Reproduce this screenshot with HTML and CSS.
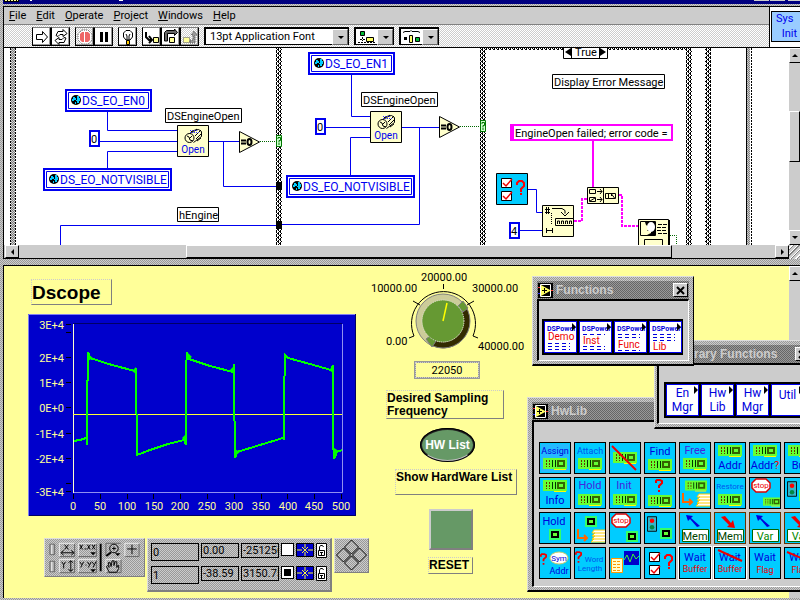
FILE: index.html
```html
<!DOCTYPE html>
<html lang="en">
<head>
<meta charset="utf-8">
<title>Dscope</title>
<link rel="stylesheet" href="styles.css">
</head>
<body>
<svg class="defs" aria-hidden="true">
  <defs>
    <pattern id="check" width="4" height="4" patternUnits="userSpaceOnUse"><path fill="#fff" d="M0 0h4v4H0z"/><path d="M0 0h1v1H0zM2 0h1v1H2zM1 1h2v1H1zM0 2h1v1H0zM2 2h1v1H2zM0 3h1v1H0zM3 3h1v1H3z"/></pattern>
    <pattern id="grain" width="2" height="2" patternUnits="userSpaceOnUse"><path fill="#ccc" d="M0 0h2v2H0z"/><path fill="#808080" d="M0 0h1v1H0zM1 1h1v1H1z"/></pattern>
    <symbol id="globe" viewBox="0 0 10 10"><circle cx="5" cy="5" r="5"/><path fill="#00ccff" d="M2 2h2v1h1v2H3v1H1V4h1zM6 1h2v2h1v3H8v2H6V6H5V5h1z"/><path fill="#00ccff" d="M4 7h1v2H4z"/></symbol>
    <symbol id="engine" viewBox="0 0 32 32"><path fill="#ffffcc" stroke="#000" d="M.5.5h31v31H.5z"/><path fill="none" stroke="#000" d="M8.500 12.500l8-7 5-1 3 2v5l-8 6M11 10l4-4M19 14l5-5M18 11l6-6M15 8l5-4M20 16l4-3"/><circle cx="12.500" cy="13" r="4.500" fill="#ffffcc" stroke="#000"/><path fill="none" stroke="#000" d="M10 11l2 1 1 3 3 1M13 13l2-2"/><path stroke="#33f" stroke-dasharray="1 1" d="M13 5.500h8M13 7.500h10"/></symbol>
    <symbol id="equal" viewBox="0 0 22 22"><path fill="#ffffcc" stroke="#000" d="M.5.5l20 10.500L.5 21.500z"/><path stroke="#000" stroke-width="2" d="M2 9.500h5M2 12.500h5"/><ellipse cx="10.500" cy="11" rx="2" ry="3" fill="none" stroke="#000" stroke-width="2"/></symbol>
    <symbol id="checks" viewBox="0 0 32 32"><path fill="#fff" stroke="#000" d="M5.500 5.500h10v9h-10zM5.500 18.500h10v9h-10z"/><path fill="none" stroke="#e00" stroke-width="1.500" d="M7 10l3 3 6-7M7 23l3 3 6-7"/><path fill="none" stroke="#f00" stroke-width="2" d="M21 12v-2l2-2h3l2 2v3l-3 3v3M25 20v2"/></symbol>
    <symbol id="board" viewBox="0 0 24 12"><path fill="#66ff33" d="M0 0h24v11H0z"/><path fill="#ff0" d="M11 11h12v1H11z"/><path stroke="#630" stroke-width="1" stroke-dasharray="2 1" d="M3.500 2v7M6.500 2v7"/><path stroke="#030" d="M9.500 2v7M12.500 2v7"/><path fill="#360" d="M14 2h8v7h-8z"/><path fill="#66ff33" d="M16 4h4v3h-4z"/></symbol>
    <symbol id="chip" viewBox="0 0 12 12"><path fill="#3f6" d="M0 0h12v11H0z"/><path d="M2 2h8v7H2z"/><path fill="#66ff33" d="M4 4h4v3H4z"/></symbol>
    <symbol id="stop" viewBox="0 0 20 15"><path fill="#fff" stroke="#d00" stroke-width="1.500" d="M5 1h10l4 4v5l-4 4H5l-4-4V5z"/></symbol>
    <symbol id="light" viewBox="0 0 11 17"><path fill="#33b5cc" stroke="#000" d="M.5.5h10v16H.5z"/><circle cx="5.500" cy="5" r="2.500" fill="#f00"/><circle cx="5.500" cy="12" r="2.500" fill="#084"/></symbol>
    <symbol id="stack" viewBox="0 0 30 14"><path fill="none" stroke="#f60" stroke-width="2" d="M2 0v9h9M8 6l3 3-3 3"/><path fill="#fff" stroke="#fc0" d="M18 1h12v12H15l3-3h-2l3-3h-3l3-3h-3z"/><path stroke="#fc0" d="M18 4h12M17 7h13M16 10h14"/></symbol>
    <symbol id="up" viewBox="0 0 14 12"><path fill="#00d" d="M0 0l7 1-2 2 9 8-3 1-7-8-2 2z"/></symbol>
    <symbol id="down" viewBox="0 0 14 12"><path fill="#e00" d="M14 12l-8-1 2-2L0 1l4-1 6 7 2-3z"/></symbol>
    <symbol id="quest" viewBox="0 0 8 13"><path fill="none" stroke="#e00" stroke-width="2" d="M1 4V2l1-1h3l2 1v2L4 7v2M4 11v2"/></symbol>
    <symbol id="vi" viewBox="0 0 15 15"><path fill="#000" d="M0 0h15v15H0z"/><path fill="none" stroke="#fff" d="M2.500 1.500h10v12h-10z"/><path fill="#ff6" d="M3 2l10 5.500L3 13z"/><path stroke="#000" d="M4 7.500h5M6.500 5v5"/><path stroke="#f33" d="M0 4.500h2M13 7.500h2"/><path stroke="#33f" d="M0 10.500h2"/></symbol>
    <symbol id="curs" viewBox="0 0 18 14"><path fill="#0000cc" stroke="#000" d="M.5.5h17v13H.5z"/><path stroke="#ff3" d="M1 7h5M12 7h5M9 1v4M9 9v4M6 4l6 6M12 4l-6 6"/></symbol>
    <symbol id="lock" viewBox="0 0 11 15"><path fill="#fff" stroke="#000" d="M.5.5h10v14H.5z"/><path fill="none" stroke="#000" d="M3.500 7V4l1-1.500h2l1 1.500M2.500 7.500h6v5h-6zM4 9.500h3M5.500 9v3"/></symbol>
  </defs>
</svg>

<main class="desktop">
  <section class="window diagram-window" aria-label="Block diagram">
    <div class="titlebar">
      <svg viewBox="0 0 800 4" width="800" height="4" aria-hidden="true"><path d="M4 0h15v2H4z"/><path stroke="#ff9" stroke-dasharray="2 1" d="M5 .5h13"/><path fill="#fff" d="M30 0h2v1h-2zM119 0h4v1h-4z"/><path fill="#ccc" d="M754 0h15v1h-15zM770 0h15v1h-15zM788 0h12v1h-12z"/></svg>
    </div>
    <div class="head">
      <div class="bars">
        <nav class="menubar">
          <a href="#"><u>F</u>ile</a><a href="#"><u>E</u>dit</a><a href="#"><u>O</u>perate</a><a href="#"><u>P</u>roject</a><a href="#"><u>W</u>indows</a><a href="#"><u>H</u>elp</a>
        </nav>
        <div class="toolbar">
          <div class="group">
            <button class="tool" aria-label="Run"><svg viewBox="0 0 16 16"><path fill="#fff" stroke="#000" d="M2.500 5.500h6v-3l5 5.500-5 5.500v-3h-6z"/></svg></button>
            <button class="tool" aria-label="Run continuously"><svg viewBox="0 0 16 16"><path fill="#fff" stroke="#000" d="M3 6.500l2-4h5V.5l4 4-4 3v-2H7l-2 2zM13 9l-2 4.500H6v2l-4-4 4-3v2h3l2-2z"/></svg></button>
          </div>
          <div class="group">
            <button class="tool grainy" aria-label="Abort"><svg viewBox="0 0 16 16"><path fill="#fff" stroke="#555" stroke-dasharray="1 1" d="M5 1h6l4 4v6l-4 4H5l-4-4V5z"/><path fill="#e66" d="M5 3h2v10H5L3 11V5zM8 3h3l2 2v6l-2 2H8z"/></svg></button>
            <button class="tool" aria-label="Pause"><svg viewBox="0 0 16 16"><path d="M4 3h3v10H4zM9 3h3v10H9z"/></svg></button>
          </div>
          <div class="group">
            <button class="tool" aria-label="Highlight execution"><svg viewBox="0 0 16 16"><path fill="#fff" stroke="#000" d="M6 11L3.500 8V4L6 1.500h4L12.500 4v4L10 11z"/><path fill="none" stroke="#000" d="M6 5l1 2v4M10 5L9 7v4"/><path fill="#fc0" stroke="#000" d="M6.500 11.500h3v4h-3z"/></svg></button>
          </div>
          <div class="group">
            <button class="tool" aria-label="Step into"><svg viewBox="0 0 16 16"><path fill="#ff9" stroke="#000" d="M9.500 8.500h5v5h-5z"/><path fill="none" stroke="#000" stroke-width="2" d="M2 3v5l3 3h2M5 7l3 4-3 3"/></svg></button>
            <button class="tool" aria-label="Step over"><svg viewBox="0 0 16 16"><path fill="#ff9" stroke="#000" d="M6.500 8.500h5v5h-5z"/><path fill="#666" stroke="#000" d="M1.500 12V3.500l2-2h8V0l3 3.500-3 3v-2h-7V12z"/></svg></button>
            <button class="tool grainy" aria-label="Step out"><svg viewBox="0 0 16 16"><path fill="#ff9" stroke="#555" stroke-dasharray="1 1" d="M1.500 8.500h6v5h-6z"/><path fill="#999" stroke="#555" stroke-dasharray="1 1" d="M8 11h3V6H9l3-4 3 4h-2v8H8z"/></svg></button>
          </div>
          <label class="drop font-drop"><select aria-label="Font"><option>13pt Application Font</option></select></label>
          <button class="drop ring" aria-label="Align objects"><svg viewBox="0 0 22 16"><path fill="#0b3" stroke="#000" d="M4.500 2.500h4v4h-4z"/><path fill="#ff6" stroke="#000" d="M10.500 8.500h7v4h-7z"/><path stroke="#000" d="M6.500 8v4M4 10.500h5M2 13.500h17" stroke-dasharray="2 1"/></svg></button>
          <button class="drop ring" aria-label="Distribute objects"><svg viewBox="0 0 22 16"><path fill="none" stroke="#000" d="M2 3.500l2-1h5l1-1 1 1h6l2 1"/><path d="M3 8h3v3H3z"/><path fill="#ff6" stroke="#000" d="M8.500 6.500h3v7h-3z"/><path fill="#0b3" stroke="#000" d="M14.500 8.500h4v4h-4z"/></svg></button>
        </div>
      </div>
      <div class="connector"><button class="sys"><span>Sys</span><span>Init</span></button></div>
    </div>
    <div class="view">
      <div class="canvas">
        <svg class="diagram" viewBox="4 48 785 197" width="785" height="197">
          <g fill="url(#check)"><path d="M276 48h6v197h-6zM480 48h6v197h-6zM686 48h6v197h-6zM705 48h6v197h-6zM486 48h200v2H486z"/></g>
          <g fill="url(#grain)"><path d="M11 48h4v197h-4zM747 48h3v197h-3z"/></g>
          <path d="M746.500 48v197" stroke="#000"/>
          <path d="M10.500 48v197M15.500 48v197M751.500 48v197" stroke="#000" stroke-dasharray="2 1"/>
          <g fill="none" stroke="#0000f0">
            <path d="M107.500 112v18.500H177M100 141.500h77M107.500 168v-16.500H177M209 141.500h30M223.500 141v45.500H276M60.500 245v-19.500H276"/>
            <path d="M351.500 75v41.500H370M326 127.500h44M350.500 175v-37.500H370M402 127.500h37M419.500 127v97.500H282M528 189.500h8.500v23h5.500M520 230.500h22"/>
          </g>
          <path fill="none" stroke="#060" stroke-dasharray="1 1" d="M260 141.500h16M460 126.500h20M670 235.500h6.500v10"/>
          <g fill="none" stroke="#f0f" stroke-width="2"><path d="M593 141v46"/><path stroke-dasharray="3 1" d="M574 221h8v-22h5M619 195h3v31h16"/></g>
          <path d="M276 182h6v8h-6zM276 221h6v8h-6z"/>
          <g fill="#cfc" stroke="#070"><path d="M276.500 135.500h5v11h-5zM480.500 120.500h5v11h-5z"/></g>
          <path fill="none" stroke="#070" d="M278 139v-1.500h2.500v3h-1.500v2M279 143v2M482 124v-1.500h2.500v3h-1.500v2M483 128v2"/>

          <g fill="#fff" stroke="#0000f0" stroke-width="2"><path d="M66 90h85v21H66zM44 169h127v21H44zM309 53h85v21h-85zM287 176h127v21H287zM90 131h9v15h-9zM316 119h9v15h-9zM510 223h9v15h-9z"/></g>
          <g fill="none" stroke="#0000f0"><path d="M68.500 92.500h80v16h-80zM46.500 171.500h122v16h-122zM311.500 55.500h80v16h-80zM289.500 178.500h122v16h-122z"/></g>
          <use href="#globe" x="71" y="95" width="10" height="10"/><use href="#globe" x="49" y="174" width="10" height="10"/>
          <use href="#globe" x="314" y="58" width="10" height="10"/><use href="#globe" x="292" y="181" width="10" height="10"/>
          <g class="d-blue"><text x="82" y="105">DS_EO_EN0</text><text x="60" y="184">DS_EO_NOTVISIBLE</text><text x="325" y="68">DS_EO_EN1</text><text x="303" y="191">DS_EO_NOTVISIBLE</text></g>

          <g fill="#fff" stroke="#000"><path d="M165.500 108.500h76v14h-76zM361.500 92.500h76v14h-76zM177.500 207.500h41v14h-41zM552.500 74.500h112v14h-112zM563.500 43.500h44v15h-44z"/></g>
          <path fill="#f0f" d="M510 124h163v17H510z"/><path fill="#fff" d="M514 126h157v13H514z"/>
          <path d="M571.500 48v10M599.500 48v10" stroke="#000"/><path d="M571 48v8l-6-4zM600 48v8l6-4z"/>
          <g class="d-text">
            <text x="167" y="120">DSEngineOpen</text><text x="363" y="104">DSEngineOpen</text><text x="179" y="219">hEngine</text>
            <text x="554" y="86">Display Error Message</text><text x="575" y="56">True</text>
            <text x="515" y="137">EngineOpen failed; error code =</text>
            <text x="91" y="143">0</text><text x="317" y="131">0</text><text x="511" y="235">4</text>
          </g>
          <use href="#engine" x="177" y="125" width="32" height="32"/><use href="#engine" x="370" y="111" width="32" height="32"/>
          <g class="d-open"><text x="193" y="153">Open</text><text x="386" y="139">Open</text></g>
          <use href="#equal" x="239" y="131" width="22" height="22"/><use href="#equal" x="439" y="116" width="22" height="22"/>
          <path fill="#00ccff" stroke="#000" d="M496.500 173.500h31v31h-31z"/><use href="#checks" x="496" y="173" width="32" height="32"/>
          <g fill="#ffffcc" stroke="#000">
            <path d="M542.500 205.500h31v31h-31zM587.500 187.500h31v16h-31zM638.500 219.500h30v31h-30z"/>
            <path d="M555.500 218.500h18v7h-18z"/><path d="M603.500 187v17M589.500 189.500h6v4h-6zM589.500 197.500h6v4h-6zM605.500 193.500h10v5h-10z"/>
            <path d="M640.500 221.500h15v14h-15zM644.500 239.500h18v8h-18z"/>
          </g>
          <path fill="none" stroke="#000" d="M545 209.500h5M545 212.500h5M546.500 207v7M548.500 207v7M552 208.500h10l3 2v3M561 212l4 4 4-4M546.500 228v5M552.500 228v5M546 230.500h7M557.500 224v-3h2v3M561.500 224v-3h2v3M565.500 224v-3h2v3M569.500 224v-3h2v3M597 191.500h5M600 189l2 2.500-2 2.500M597 199.500h5M600 197l2 2.500-2 2.500M590 201l5-3M608.500 194v4M611.500 196v-2l3 4"/>
          <path fill="none" stroke="#000" stroke-dasharray="1 1" d="M551.500 213v12"/>
          <path d="M645 222h10v13h-8l4-2v-2h-4l2-2v-2l-3-2z"/><ellipse cx="651" cy="227" rx="4" ry="5" fill="#fff"/>
          <path fill="none" stroke="#000" stroke-dasharray="4 1" d="M658 224.500h9M657 227.500h10M657 230.500h10M658 233.500h9"/><path stroke="#000" stroke-width="2" d="M669 220v26"/>
        </svg>
      </div>
      <div class="vscroll">
        <button class="arrow up" aria-label="Scroll up"></button><div class="thumb"></div><button class="arrow down" aria-label="Scroll down"></button>
      </div>
      <div class="hscroll">
        <button class="arrow left" aria-label="Scroll left"></button><div class="thumb"></div><button class="arrow right" aria-label="Scroll right"></button>
      </div>
      <div class="grip"></div>
    </div>
  </section>

  <section class="window panel-window" aria-label="Front panel">
    <div class="panel">
      <div class="scope">
        <h1 class="engraved title">Dscope</h1>
        <svg class="graph" viewBox="28 314 328 202" width="328" height="202" role="img" aria-label="Waveform graph">
          <path fill="#0000cc" d="M28 314h328v202H28z"/>
          <path fill="none" stroke="#8080f0" d="M28.500 516V314.500H356"/><path fill="none" stroke="#000066" d="M29 515.500h326.500V314"/>
          <path stroke="#000066" d="M73 323.500h269"/><path fill="none" stroke="#9090f0" d="M74 492.500h268.500V324"/>
          <path stroke="#ffffcc" d="M73.500 324v169"/><path stroke="#ff3" d="M73 414.500h269"/>
          <path stroke="#000" d="M66 324.500h5M66 332.500h5M66 357.500h5M66 382.500h5M66 407.500h5M66 433.500h5M66 458.500h5M66 483.500h5M66 491.500h5M73.500 494v5M100.500 494v5M127.500 494v5M153.500 494v5M180.500 494v5M207.500 494v5M234.500 494v5M261.500 494v5M287.500 494v5M314.500 494v5M341.500 494v5"/>
          <path class="trace" d="M74 441l10-2 3-2v8-64l1-1v-28l2 6 22 7 23 6 1-3v45l1 2v40l13-5 18-6 16-4 2 5v-76l1-17 2 7 21 7 23 6 1-8v18l1 76 2-6 23-7 23-7 1 2v-42l1-43 3 3 22 6 21 6 2-5v76l1 18 3-7 5-2"/>
          <path fill="#0f0" d="M88 354l5 4-5 3zM136 367l-4 4 4 3zM186 434l-4 4 4 4zM187 352l5 5-5 3zM234 366l-4 4 4 3zM235 449l5 3-5 4zM333 366l-4 4 4 3zM334 448l5 3-5 5z"/>
          <g class="y-axis"><text x="64" y="329">3E+4</text><text x="64" y="362">2E+4</text><text x="64" y="387">1E+4</text><text x="64" y="412">0E+0</text><text x="64" y="438">-1E+4</text><text x="64" y="463">-2E+4</text><text x="64" y="496">-3E+4</text></g>
          <g class="x-axis"><text x="73" y="510">0</text><text x="100" y="510">50</text><text x="127" y="510">100</text><text x="154" y="510">150</text><text x="180" y="510">200</text><text x="207" y="510">250</text><text x="234" y="510">300</text><text x="261" y="510">350</text><text x="288" y="510">400</text><text x="314" y="510">450</text><text x="341" y="510">500</text></g>
        </svg>
        <div class="scope-tools">
          <div class="raised zoom-tools">
            <svg viewBox="0 0 101 39" width="99" height="37" aria-hidden="true">
              <path fill="#aaa" stroke="#666" d="M3.500 5.500h5v11h-5zM3.500 23.500h5v11h-5z"/><path stroke="#fff" d="M5.500 6v10M5.500 24v10"/>
              <path stroke="#000" stroke-width="2" d="M57 5v29"/>
              <g fill="none" stroke="#eee"><path d="M13.500 18V4.500H30M33.500 18V4.500H53M13.500 35V21.500H30M33.500 35V21.500H53M62.500 35V21.500H78M82.500 18V4.500H98"/></g>
              <g fill="none" stroke="#666"><path d="M14 18.500h15.500V5M34 18.500h18.500V5M14 35.500h15.500V22M34 35.500h18.500V22M63 35.500h15.500V22M83 18.500h14.500V5M62.500 18V4.500H78"/></g>
              <g fill="none" stroke="#000"><path d="M19 6l4 5M23 6l-4 5M16 14.500h12M18 12l-3 2.500 3 2.500M26 12l3 2.500-3 2.500M16 24l2 3 2-3M18 27v4M25.500 23v11M23 25l2.500-2 2.500 2M23 32l2.500 2 2.500-2M35 6l3 5M38 6l-3 5M40 10.500h2M43 6l3 5M46 6l-3 5M48 6l3 5M51 6l-3 5M35 24l2 3M39 24l-3 6M41 27.500h1M43 24l2 3M47 24l-3 6M48 24l2 3M52 24l-3 6M90 6v10M85 10.500h10"/><circle cx="71" cy="10" r="4.500"/><path stroke-width="2" d="M68 14l-5 4"/><path d="M69 10h4M71 8v4M66 35l-3-6 1-1 2 2-1-5h2l1 4 1-6h2v5l1-4h2v6l1-2h1v3l-2 4z"/></g><path d="M46 14h6l-3 3zM46 32h6l-3 3zM72 15h6l-3 3z"/>
            </svg>
          </div>
          <div class="raised cursors">
            <div class="cursor-row"><input class="c-name" aria-label="Cursor 0 name" value="0"><input class="c-num" aria-label="Cursor 0 x" value="0.00"><input class="c-num" aria-label="Cursor 0 y" value="-251256"><button class="c-swatch" aria-label="Cursor 0 active"></button><button class="c-icon" aria-label="Cursor 0 style"><svg width="18" height="14"><use href="#curs"/></svg></button><button class="c-icon" aria-label="Cursor 0 lock"><svg width="11" height="15"><use href="#lock"/></svg></button></div>
            <div class="cursor-row"><input class="c-name" aria-label="Cursor 1 name" value="1"><input class="c-num" aria-label="Cursor 1 x" value="-38.59"><input class="c-num" aria-label="Cursor 1 y" value="3150.75"><button class="c-swatch on" aria-label="Cursor 1 active"></button><button class="c-icon" aria-label="Cursor 1 style"><svg width="18" height="14"><use href="#curs"/></svg></button><button class="c-icon" aria-label="Cursor 1 lock"><svg width="11" height="15"><use href="#lock"/></svg></button></div>
          </div>
          <button class="raised mover" aria-label="Move cursor"><svg viewBox="0 0 33 33" width="33" height="33"><path fill="none" stroke="#000" d="M16.500 1l7 7-7 7-7-7zM16.500 17l7 7-7 7-7-7zM8.500 9l7 7-7 7-7-7zM24.500 9l7 7-7 7-7-7z"/></svg></button>
        </div>
      </div>
      <div class="controls">
        <svg class="knob" viewBox="366 266 160 92" width="160" height="92" role="img" aria-label="Sampling frequency knob">
          <path fill="none" stroke="#000" d="M414 336A32 32 0 1 1 473 336M414 336l-5 2M473 336l5 2M420 305l-7-4M467 305l7-4M443.500 289v-5"/>
          <circle cx="443" cy="321" r="24" fill="none" stroke="#cccc99" stroke-width="6"/>
          <path fill="none" stroke="#332b00" stroke-width="6" d="M463 308A24 24 0 0 1 431 342"/>
          <circle cx="443" cy="321" r="27" fill="none" stroke="#808080"/>
          <path fill="#669933" stroke="#808080" d="M458 306l5-5 5 7-5 4zM426 339l4-3 6 5-4 6z"/>
          <circle cx="443" cy="321" r="21" fill="#669933" stroke="#ddd" stroke-dasharray="1 1"/>
          <path stroke="#ff0" stroke-width="1.500" d="M443 321l4-18"/>
          <g class="k-text"><text x="386" y="345">0.00</text><text x="371" y="292">10000.00</text><text x="421" y="281">20000.00</text><text x="472" y="292">30000.00</text><text x="478" y="350">40000.00</text></g>
        </svg>
        <input class="readout" aria-label="Desired sampling frequency" value="22050">
        <p class="engraved desired">Desired Sampling Frequency</p>
        <button class="hw-button">HW List</button>
        <p class="engraved show">Show HardWare List</p>
        <button class="reset" aria-labelledby="reset-label"></button>
        <p class="engraved reset-label" id="reset-label">RESET</p>
      </div>
    </div>
    <div class="vscroll"><button class="arrow up" aria-label="Scroll up"></button></div>
  </section>

  <section class="palette hwlib" aria-label="HwLib">
    <header><svg width="15" height="15"><use href="#vi"/></svg><h2>HwLib</h2></header>
    <div class="well">
      <div class="tiles">
        <button class="tile"><svg viewBox="0 0 32 32"><path fill="#69f" opacity=".35" d="M2 2h28v28H2z"/><text x="16" y="12">Assign</text><use href="#board" x="4" y="16" width="24" height="12"/></svg></button>
        <button class="tile"><svg viewBox="0 0 32 32"><text class="light" x="16" y="12">Attach</text><use href="#board" x="4" y="16" width="24" height="12"/></svg></button>
        <button class="tile"><svg viewBox="0 0 32 32"><use href="#board" x="4" y="10" width="24" height="12"/><path stroke="#e00" stroke-width="2" d="M3 4l24 24"/></svg></button>
        <button class="tile"><svg viewBox="0 0 32 32"><text class="big" x="16" y="13">Find</text><use href="#board" x="4" y="17" width="24" height="12"/></svg></button>
        <button class="tile"><svg viewBox="0 0 32 32"><text class="big violet" x="16" y="12">Free</text><use href="#board" x="4" y="16" width="24" height="12"/></svg></button>
        <button class="tile"><svg viewBox="0 0 32 32"><use href="#board" x="4" y="3" width="24" height="12"/><text class="big" x="16" y="27">Addr</text></svg></button>
        <button class="tile"><svg viewBox="0 0 32 32"><use href="#board" x="4" y="3" width="24" height="12"/><text class="big" x="16" y="27">Addr<tspan class="red">?</tspan></text></svg></button>
        <button class="tile"><svg viewBox="0 0 32 32"><use href="#board" x="4" y="3" width="24" height="12"/><text class="big" x="16" y="27">Buf</text></svg></button>

        <button class="tile"><svg viewBox="0 0 32 32"><use href="#board" x="4" y="3" width="24" height="12"/><text class="big" x="16" y="27">Info</text></svg></button>
        <button class="tile"><svg viewBox="0 0 32 32"><text class="big violet" x="16" y="12">Hold</text><use href="#board" x="4" y="17" width="24" height="12"/></svg></button>
        <button class="tile"><svg viewBox="0 0 32 32"><text class="big violet" x="15" y="12">Init</text><use href="#board" x="4" y="17" width="24" height="12"/></svg></button>
        <button class="tile"><svg viewBox="0 0 32 32"><use href="#quest" x="11" y="2" width="8" height="13"/><use href="#board" x="4" y="18" width="24" height="12"/></svg></button>
        <button class="tile"><svg viewBox="0 0 32 32"><use href="#board" x="6" y="3" width="22" height="12"/><use href="#stack" x="2" y="16" width="30" height="14"/></svg></button>
        <button class="tile"><svg viewBox="0 0 32 32"><text class="light small" x="16" y="12">Restore</text><use href="#board" x="4" y="17" width="24" height="12"/></svg></button>
        <button class="tile"><svg viewBox="0 0 32 32"><use href="#stop" x="2" y="1" width="20" height="15"/><text class="small red" x="12" y="11">stop</text><use href="#board" x="14" y="19" width="18" height="12"/></svg></button>
        <button class="tile"><svg viewBox="0 0 32 32"><use href="#light" x="3" y="4" width="10" height="16"/><use href="#board" x="15" y="13" width="24" height="12"/></svg></button>

        <button class="tile"><svg viewBox="0 0 32 32"><text class="big" x="15" y="13">Hold</text><use href="#chip" x="10" y="17" width="12" height="12"/></svg></button>
        <button class="tile"><svg viewBox="0 0 32 32"><use href="#chip" x="11" y="4" width="12" height="12"/><use href="#stack" x="2" y="17" width="30" height="14"/></svg></button>
        <button class="tile"><svg viewBox="0 0 32 32"><use href="#stop" x="2" y="1" width="20" height="15"/><text class="small red" x="12" y="11">stop</text><use href="#chip" x="17" y="19" width="12" height="12"/></svg></button>
        <button class="tile"><svg viewBox="0 0 32 32"><use href="#light" x="3" y="4" width="10" height="16"/><use href="#chip" x="16" y="16" width="12" height="12"/></svg></button>
        <button class="tile mem"><svg viewBox="0 0 32 32"><use href="#up" x="7" y="3" width="14" height="12"/><path fill="#fff" stroke="#060" d="M3.500 17.500h26v12h-26z"/><text class="big dark" x="16" y="28">Mem</text></svg></button>
        <button class="tile mem"><svg viewBox="0 0 32 32"><use href="#down" x="7" y="4" width="14" height="12"/><path fill="#fff" stroke="#060" d="M3.500 17.500h26v12h-26z"/><text class="big dark" x="16" y="28">Mem</text></svg></button>
        <button class="tile mem"><svg viewBox="0 0 32 32"><use href="#up" x="7" y="3" width="14" height="12"/><path fill="#fff" stroke="#060" d="M3.500 17.500h26v12h-26z"/><text class="big green" x="16" y="28">Var</text></svg></button>
        <button class="tile mem"><svg viewBox="0 0 32 32"><use href="#down" x="7" y="4" width="14" height="12"/><path fill="#fff" stroke="#060" d="M3.500 17.500h26v12h-26z"/><text class="big green" x="16" y="28">Var</text></svg></button>

        <button class="tile"><svg viewBox="0 0 32 32"><use href="#quest" x="1" y="6" width="7" height="12"/><ellipse cx="20" cy="11" rx="9" ry="6" fill="#fff" stroke="#cc6"/><text class="small" x="20" y="14">Sym</text><text x="20" y="27">Addr</text></svg></button>
        <button class="tile"><svg viewBox="0 0 32 32"><use href="#quest" x="1" y="4" width="7" height="12"/><text class="small light" x="20" y="15">Word</text><text class="small light" x="16" y="24">Length</text></svg></button>
        <button class="tile"><svg viewBox="0 0 32 32"><path fill="#00c" d="M15 4h15v14H15z"/><path fill="none" stroke="#3f3" d="M15 13l3-5 3 7 3-8 3 5 3-3"/><path fill="#ffc" stroke="#f90" d="M2.500 11.500h11v14h-11z"/><path stroke="#f90" stroke-dasharray="3 1" d="M4 14.500h8M4 17.500h8M4 20.500h8M4 23.500h8"/></svg></button>
        <button class="tile"><svg viewBox="0 0 32 32"><use href="#checks" width="32" height="32"/></svg></button>
        <button class="tile lit"><svg viewBox="0 0 32 32"><text class="big" x="16" y="14">Wait</text><text class="red" x="16" y="25">Buffer</text></svg></button>
        <button class="tile lit"><svg viewBox="0 0 32 32"><text class="big" x="16" y="14">Wait</text><text class="red" x="16" y="25">Buffer</text><path stroke="#e00" stroke-width="2" d="M4 3l24 11"/></svg></button>
        <button class="tile"><svg viewBox="0 0 32 32"><text class="big" x="16" y="14">Wait</text><text class="red" x="16" y="26">Flag</text></svg></button>
        <button class="tile"><svg viewBox="0 0 32 32"><text class="big" x="16" y="14">Wait</text><text class="red" x="16" y="26">Flag</text><path stroke="#e00" stroke-width="2" d="M3 5l26 11"/></svg></button>
      </div>
    </div>
  </section>

  <section class="palette library" aria-label="Library Functions">
    <header><svg width="15" height="15"><use href="#vi"/></svg><h2>Library Functions</h2><button class="close" aria-label="Close"><svg viewBox="0 0 9 9" width="9" height="9"><path stroke="#000" stroke-width="2" d="M1 1l7 7M8 1L1 8"/></svg></button></header>
    <div class="well">
      <div class="cards">
        <button class="card"><span>En</span><span>Mgr</span></button><button class="card"><span>Hw</span><span>Lib</span></button><button class="card"><span>Hw</span><span>Mgr</span></button><button class="card top"><span>Util</span></button>
      </div>
    </div>
  </section>

  <section class="palette functions" aria-label="Functions">
    <header><svg width="15" height="15"><use href="#vi"/></svg><h2>Functions</h2><button class="close" aria-label="Close"><svg viewBox="0 0 9 9" width="9" height="9"><path stroke="#000" stroke-width="2" d="M1 1l7 7M8 1L1 8"/></svg></button></header>
    <div class="well">
      <div class="cards">
        <button class="card"><svg class="dsp" viewBox="0 0 30 30"><text x="1" y="9">DSPower</text><path d="M2 21.500h22M2 24.500h22M2 27.500h22"/><text class="name" x="2" y="18">Demo</text></svg></button>
        <button class="card"><svg class="dsp" viewBox="0 0 30 30"><text x="1" y="9">DSPower</text><path d="M2 12.500h22M2 24.500h22M2 27.500h22"/><text class="name" x="2" y="22">Inst</text></svg></button>
        <button class="card"><svg class="dsp" viewBox="0 0 30 30"><text x="1" y="9">DSPower</text><path d="M2 12.500h22M2 15.500h22M2 28.500h22"/><text class="name" x="2" y="26">Func</text></svg></button>
        <button class="card"><svg class="dsp" viewBox="0 0 30 30"><text x="1" y="9">DSPower</text><path d="M2 12.500h22M2 15.500h22M2 18.500h22"/><text class="name" x="2" y="28">Lib</text></svg></button>
      </div>
    </div>
  </section>
</main>
</body>
</html>
```

FILE: styles.css
```css
* { box-sizing: border-box; }

:root {
  --ui: Roboto, "Liberation Sans", Arial, sans-serif;
  --bold: "Liberation Sans", Arial, sans-serif;
  --dither-light: repeating-conic-gradient(#fff 0 25%, #ccc 0 50%) 0 0 / 2px 2px;
  --dither-mid: repeating-conic-gradient(#ccc 0 25%, #999 0 50%) 0 0 / 2px 2px;
  --dither-dark: repeating-conic-gradient(#999 0 25%, #666 0 50%) 0 0 / 2px 2px;
  --yellow: #ffff99;
}

body { margin: 0; font: 11px var(--ui); color: #000; }
button, input, select { margin: 0; padding: 0; border: 0; border-radius: 0; font: inherit; color: inherit; background: none; }
h1, h2, p { margin: 0; }
.defs { position: absolute; width: 0; height: 0; }

.desktop { position: relative; display: flex; flex-direction: column; min-height: 100vh; overflow: hidden; background: var(--dither-mid); }

/* Windows */
.diagram-window { padding-left: 3px; }
.titlebar { height: 4px; background: #000080; overflow: hidden; }
.titlebar svg { display: block; margin-left: -3px; }
.head { display: flex; margin-top: 2px; border-top: 1px solid #000; border-left: 1px solid #000; border-bottom: 1px solid #000; background: #ccc; }
.bars { flex: 1; min-width: 0; }
.menubar { display: flex; gap: 10px; height: 18px; padding: 0 5px; border-bottom: 1px solid #808080; line-height: 18px; }
.menubar a { color: #000; text-decoration: none; }
.toolbar { display: flex; align-items: center; gap: 5px; height: 22px; padding-left: 28px; background: var(--dither-light); }
.group { display: flex; }
.tool { width: 19px; height: 19px; padding: 1px; border: 1px solid #000; border-top-color: #808080; background: #fff; box-shadow: inset -1px -1px #999; }
.tool svg { display: block; width: 16px; height: 16px; }
.tool.grainy { background: var(--dither-light); }
.drop { position: relative; display: flex; height: 18px; border: 2px solid #000; border-right-width: 1px; border-bottom-width: 1px; background: #fff; }
.font-drop { width: 145px; }
.font-drop select { flex: 1; padding-left: 4px; appearance: none; outline: 0; }
.drop::before { content: ""; position: absolute; top: 0; right: 0; width: 14px; height: 14px; background: #ccc; border: 1px solid #fff; border-right-color: #666; border-bottom-color: #666; pointer-events: none; }
.drop::after { content: ""; position: absolute; top: 7px; right: 4px; border: 3px solid transparent; border-top-color: #000; border-bottom: 0; pointer-events: none; }
.ring { width: 40px; }
.ring svg { width: 22px; height: 16px; }
.connector { width: 31px; padding: 4px 0 5px 1px; border-left: 1px solid #000; background: #fff; }
.sys { display: grid; width: 29px; height: 31px; border: 1px solid #000; border-right: 0; background: #99ccff; color: #0000ee; line-height: 14px; }
.sys span:first-child { text-align: left; padding-left: 4px; }
.sys span:last-child { text-align: right; padding-right: 3px; }

.view { display: grid; grid-template-columns: 1fr 11px; border-left: 1px solid #000; background: #ccc; }
.canvas { overflow: hidden; background: #fff; }
.diagram { display: block; }
.vscroll { display: flex; flex-direction: column; background: #ccc; }
.vscroll .thumb { flex: 0 0 51px; margin-top: 48px; }
.vscroll .down { margin-top: auto; }
.hscroll { display: flex; height: 14px; border-bottom: 1px solid #000; padding-left: 1px; }
.hscroll .thumb { flex: 0 1 62%; margin-left: 167px; }
.hscroll .right { margin-left: auto; }
.thumb { background: #ccc; border: 1px solid #fff; border-right-color: #000; border-bottom-color: #000; }
.arrow { display: grid; place-items: center; width: 14px; height: 13px; background: #ccc; border: 1px solid #fff; border-right-color: #000; border-bottom-color: #000; }
.vscroll .arrow { width: 11px; height: 15px; border-right: 0; }
.arrow::before { content: ""; border: 3px solid transparent; }
.up::before { border-bottom-color: #000; border-top: 0; }
.down::before { border-top-color: #000; border-bottom: 0; }
.left::before { border-right-color: #000; border-left: 0; }
.right::before { border-left-color: #000; border-right: 0; }
.grip { background: repeating-linear-gradient(135deg, #ccc 0 2px, #fff 2px 3px, #808080 3px 4px); }

.d-text { font: 11px var(--ui); }
.d-blue { font: 12px var(--ui); }
.d-blue, .d-open { fill: #0000f0; }
.d-open { font: 10px var(--ui); text-anchor: middle; }

.panel-window { display: flex; flex: 1; margin: 6px 0 2px 3px; border-top: 1px solid #000; border-left: 1px solid #000; background: var(--yellow); }
.panel { flex: 1; display: flex; align-items: flex-start; min-width: 0; }
.scope { display: flex; flex-direction: column; width: 362px; padding: 13px 0 0 24px; }
.engraved { font: bold 12px/13px var(--bold); border: 1px dotted #ccc; border-right: 1px solid #808080; border-bottom: 1px solid #808080; padding: 1px 0; }
.title { width: 81px; height: 26px; margin-left: 3px; font-size: 19px; line-height: 24px; }
.graph { display: block; margin-top: 9px; }
.trace { fill: none; stroke: #00ff00; stroke-width: 2px; shape-rendering: crispEdges; }
.y-axis, .x-axis { font: 11px var(--ui); fill: #ffff99; text-anchor: middle; }
.y-axis { text-anchor: end; }
.scope-tools { display: flex; align-items: flex-start; gap: 2px; margin: 22px 0 0 16px; }
.raised { background: var(--dither-mid); border: 1px solid #ddd; border-right-color: #808080; border-bottom-color: #808080; }
.raised svg { display: block; }
.zoom-tools { width: 101px; }
.cursors { width: 185px; padding: 4px 3px 6px; display: grid; gap: 5px; border-right-width: 2px; border-bottom-width: 2px; }
.cursor-row { display: flex; gap: 2px; align-items: flex-start; }
.cursor-row input { min-width: 0; height: 15px; border: 1px solid #000; padding-left: 1px; }
.cursor-row .c-name { width: 48px; height: 18px; }
.cursor-row .c-num { width: 38px; }
.c-swatch { width: 13px; height: 13px; border: 1px solid #000; background: #fff; }
.c-swatch.on { box-shadow: inset 0 0 0 2px #fff; background: #000; }
.mover { width: 35px; height: 35px; }

.controls { display: flex; flex-direction: column; align-items: flex-start; width: 160px; }
.knob { display: block; }
.k-text { font: 11px var(--ui); }
.readout { width: 66px; height: 18px; margin: 3px 0 0 48px; border: 2px solid #999; outline: 1px dotted #ccc; outline-offset: -2px; text-align: center; }
.desired { width: 118px; height: 29px; margin: 11px 0 0 20px; }
.hw-button { width: 55px; height: 34px; margin: 9px 0 0 54px; border: 2px solid #222; border-bottom-color: #bbb; border-radius: 50%; outline: 1px solid #000; outline-offset: -1px; background: #669966; color: #fff; font: bold 12px var(--bold); white-space: nowrap; }
.show { width: 122px; height: 26px; margin: 7px 0 0 29px; white-space: nowrap; }
.reset { width: 44px; height: 41px; margin: 14px 0 0 63px; border: 2px solid #ccc; border-right-color: #808080; border-bottom-color: #808080; background: #669966; }
.reset-label { width: 45px; margin: 7px 0 0 62px; }

/* Floating palettes */
.palette { position: absolute; padding: 4px 4px 3px; background: var(--dither-mid); border: 1px solid #ddd; border-right-color: #000; border-bottom: 2px solid #000; }
.palette header { display: flex; align-items: center; height: 18px; padding: 0 1px; background: var(--dither-dark); }
.palette h2 { flex: 1; padding-left: 3px; font: bold 12px var(--bold); color: #ccc; white-space: nowrap; }
.close { display: grid; place-items: center; width: 15px; height: 14px; background: #ccc; border: 1px solid #fff; border-right-color: #000; border-bottom-color: #000; }
.well { background: #ccc; border: 2px solid #000; border-right: 1px solid #fff; border-bottom: 1px solid #fff; }
.functions { left: 532px; top: 276px; width: 162px; }
.functions .well { padding: 18px 3px 5px; }
.library { left: 654px; top: 340px; width: 162px; padding-left: 2px; }
.library .well { padding: 17px 0 5px 5px; }
.hwlib { left: 527px; top: 397px; width: 298px; }
.hwlib .well { padding: 20px 5px 7px; }

.tiles { display: grid; grid-template-columns: repeat(8, 32px); gap: 3px; }
.tile { width: 32px; height: 32px; border: 1px solid #000; background: #00ccff; overflow: hidden; }
.tile svg { display: block; width: 32px; height: 32px; margin: -1px; }
.tile text { font: 9px var(--ui); text-anchor: middle; fill: #0000dd; }
.tile .big { font-size: 11px; }
.tile .small { font-size: 8px; }
.tile .light { fill: #0055ee; }
.tile .violet { fill: #4422dd; }
.tile .red { fill: #ee0000; }
.tile .dark { fill: #004400; }
.tile .green { fill: #008800; }
.tile.mem { border-color: #663300; }
.tile.lit { outline: 1px solid #fff; }

.cards { display: flex; }
.card { position: relative; flex: none; display: flex; flex-direction: column; align-items: center; justify-content: center; width: 36px; height: 36px; margin-right: -1px; border: 2px solid #000; border-right-width: 1px; background: #fff; box-shadow: inset 0 0 0 1px #0000ee; color: #0000dd; font: 12px/14px var(--ui); }
.card.top { justify-content: flex-start; padding-top: 4px; }
.card::after { content: ""; position: absolute; top: 2px; right: 1px; border: 4px solid transparent; border-left-color: #000; border-right: 0; }
.dsp { width: 30px; height: 30px; }
.dsp text { font: bold 7px var(--ui); fill: #0000dd; }
.dsp .name { font: 10px var(--ui); fill: #ee0000; }
.dsp path { stroke: #0000dd; stroke-dasharray: 4 3; }
```
